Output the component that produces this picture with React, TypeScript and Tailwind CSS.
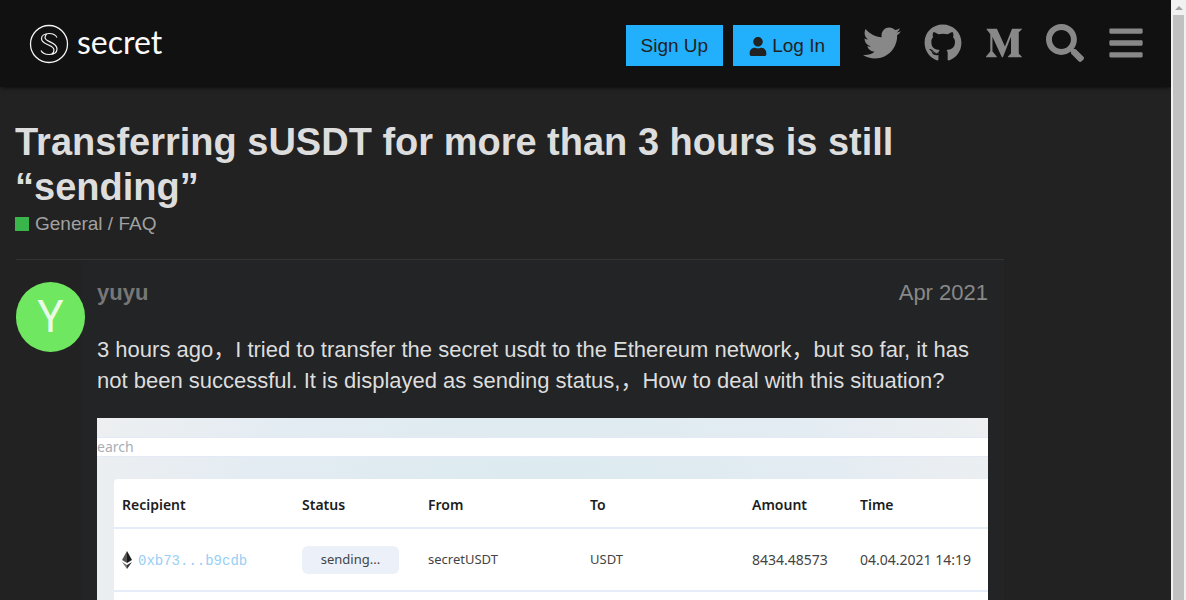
import type { ReactNode } from "react";
import { FaBars, FaGithub, FaMediumM, FaSearch, FaTwitter, FaUser } from "react-icons/fa";

function SecretMark() {
  return (
    <svg className="size-10" viewBox="0 0 40 40" fill="none" stroke="#f4f4f4" aria-hidden="true">
      <circle cx="20" cy="20" r="18.5" strokeWidth="1.3" />
      <path
        strokeWidth="1.2"
        d="M28 13.5C26.500 10.500 23.500 9.500 20 9.500c-4.500 0-7.500 2-7.500 5.200 0 6.500 12.500 5.500 12.500 11.300 0 2-1 3.500-2.500 4.300M12 26.500c1.500 3 4.500 4 8 4 5 0 8-2.200 8-5.500 0-7.500-12-6.500-12-11.500 0-1.500.7-2.800 2-3.600"
      />
    </svg>
  );
}

function EthereumMark() {
  return (
    <svg className="h-[18px] w-3 shrink-0" viewBox="0 0 12 18" aria-hidden="true">
      <path fill="#555" d="M6 0 1 9l5 3z" />
      <path fill="#1c1c1c" d="m6 0 5 9-5 3z" />
      <path fill="#777" d="m1 11 5 3v4z" />
      <path fill="#333" d="m11 11-5 3v4z" />
    </svg>
  );
}

function NavLink({ label, children }: { label: string; children: ReactNode }) {
  return (
    <a href="#" aria-label={label} className="flex w-[61px] justify-center text-[38px]">
      {children}
    </a>
  );
}

function Header() {
  return (
    <header className="z-10 flex h-[87px] shrink-0 items-center justify-between bg-[#111] pr-[15px] pl-[29px] shadow-[0_2px_4px_-1px_rgba(0,0,0,0.6)]">
      <a href="#" className="flex items-center gap-2 font-[Lato,sans-serif] text-[32px] leading-10 text-[#fafafa]">
        <SecretMark />
        <span className="pb-1">secret</span>
      </a>
      <div className="flex items-center">
        <div className="mr-[11px] flex gap-[10px] pt-1 text-[19px] text-[#222]">
          <button type="button" className="h-[41px] bg-[#22b0fc] px-[15px] pt-0.5">
            Sign Up
          </button>
          <button type="button" className="flex h-[41px] items-center gap-1 bg-[#22b0fc] px-[15px] pt-0.5">
            <FaUser className="w-5" />
            Log In
          </button>
        </div>
        <nav className="flex pb-0.5 text-[#888]">
          <NavLink label="Twitter"><FaTwitter /></NavLink>
          <NavLink label="GitHub"><FaGithub /></NavLink>
          <NavLink label="Medium"><FaMediumM /></NavLink>
          <button type="button" aria-label="Search" className="flex w-[61px] justify-center text-[38px]">
            <FaSearch />
          </button>
          <button type="button" aria-label="Menu" className="flex w-[61px] justify-center text-[38px]">
            <FaBars />
          </button>
        </nav>
      </div>
    </header>
  );
}

function TransferTable() {
  return (
    <div className="h-[420px] overflow-hidden bg-[radial-gradient(ellipse_at_50%_30%,#d9eaee_0%,#e4ecf3_50%,#f0f0f0_85%)] pt-5 font-['Noto_Sans',sans-serif] text-[13px] text-[#444]">
      <div className="flex h-[18px] items-center bg-white text-[14px] leading-[18px] text-[#a9aeb5] outline-1 outline-[#e3eaf6]">
        earch
      </div>
      <div className="mt-[23px] ml-[17px] h-full rounded-tl-sm bg-white">
        <table className="w-full table-fixed text-left">
          <colgroup>
            <col className="w-[188px]" />
            <col className="w-[126px]" />
            <col className="w-[162px]" />
            <col className="w-[162px]" />
            <col className="w-[108px]" />
            <col />
          </colgroup>
          <thead>
            <tr className="h-[49px] border-b-2 border-[#e6edf8] text-[14px] text-[#1c1c1c]">
              <th className="pt-0.5 pl-2 font-semibold">Recipient</th>
              <th className="pt-0.5 font-semibold">Status</th>
              <th className="pt-0.5 font-semibold">From</th>
              <th className="pt-0.5 font-semibold">To</th>
              <th className="pt-0.5 font-semibold">Amount</th>
              <th className="pt-0.5 font-semibold">Time</th>
            </tr>
          </thead>
          <tbody>
            <tr className="h-[63px] border-b-2 border-[#e6edf8]">
              <td className="pl-[7px]">
                <span className="flex items-center gap-[5px] font-['Liberation_Mono',monospace] text-[14px] text-[#98cff5]">
                  <EthereumMark />
                  <span className="pt-1">0xb73...b9cdb</span>
                </span>
              </td>
              <td>
                <span className="flex h-7 w-[97px] items-center justify-center rounded-md bg-[#ebf0f9]">sending...</span>
              </td>
              <td>secretUSDT</td>
              <td>USDT</td>
              <td className="text-[14px]">8434.48573</td>
              <td className="text-[14px]">04.04.2021 14:19</td>
            </tr>
          </tbody>
        </table>
      </div>
    </div>
  );
}

function Post() {
  return (
    <article className="ml-[1px] flex max-w-[988px] border-t border-[#313335]">
      <div className="z-[1] w-[65px] shrink-0 pt-[22px]">
        <div className="flex h-[70px] w-[69px] items-center justify-center rounded-full bg-[#70e760] font-[Roboto,sans-serif] text-[44px] text-[#e9fbe6] -mr-1">
          Y
        </div>
      </div>
      <div className="min-w-0 flex-1 bg-[#222426] px-4 text-[22px]">
        <div className="flex justify-between pt-[18px] leading-[30px]">
          <a href="#" className="font-bold text-[#777]">yuyu</a>
          <a href="#" className="text-[#888]">Apr 2021</a>
        </div>
        <p className="mt-[26px] mb-[22px] leading-[31px] text-[#ddd]">
          3 hours ago，I tried to transfer the secret usdt to the Ethereum network，but so far, it has not been successful. It is displayed as sending status,，How to deal with this situation?
        </p>
        <TransferTable />
      </div>
    </article>
  );
}

function ScrollTrack() {
  return (
    <div className="flex w-[15px] shrink-0 flex-col bg-[#f1f1f1]" aria-hidden="true">
      <div className="flex h-[15px] items-center justify-center">
        <svg className="h-1 w-2" viewBox="0 0 8 4"><path fill="#a3a3a3" d="M4 0 0 4h8z" /></svg>
      </div>
      <div className="mx-0.5 flex-1 bg-[#c1c1c1]" />
    </div>
  );
}

export default function App() {
  return (
    <div className="flex h-screen overflow-hidden bg-[#222] font-['Liberation_Sans','Noto_Sans_CJK_SC',sans-serif]">
      <div className="flex min-w-0 flex-1 flex-col overflow-hidden">
        <Header />
        <main className="px-[15px] pt-[33px]">
          <h1 className="max-w-[988px] text-[38px] leading-[45px] font-bold text-[#ddd]">
            Transferring sUSDT for more than 3 hours is still “sending”
          </h1>
          <a href="#" className="mb-[22px] flex items-center gap-[6px] text-[19px] leading-[27px] text-[#a1a1a1]">
            <span className="size-[14px] bg-[#3ab54a]" />
            General / FAQ
          </a>
          <Post />
        </main>
      </div>
      <ScrollTrack />
    </div>
  );
}
